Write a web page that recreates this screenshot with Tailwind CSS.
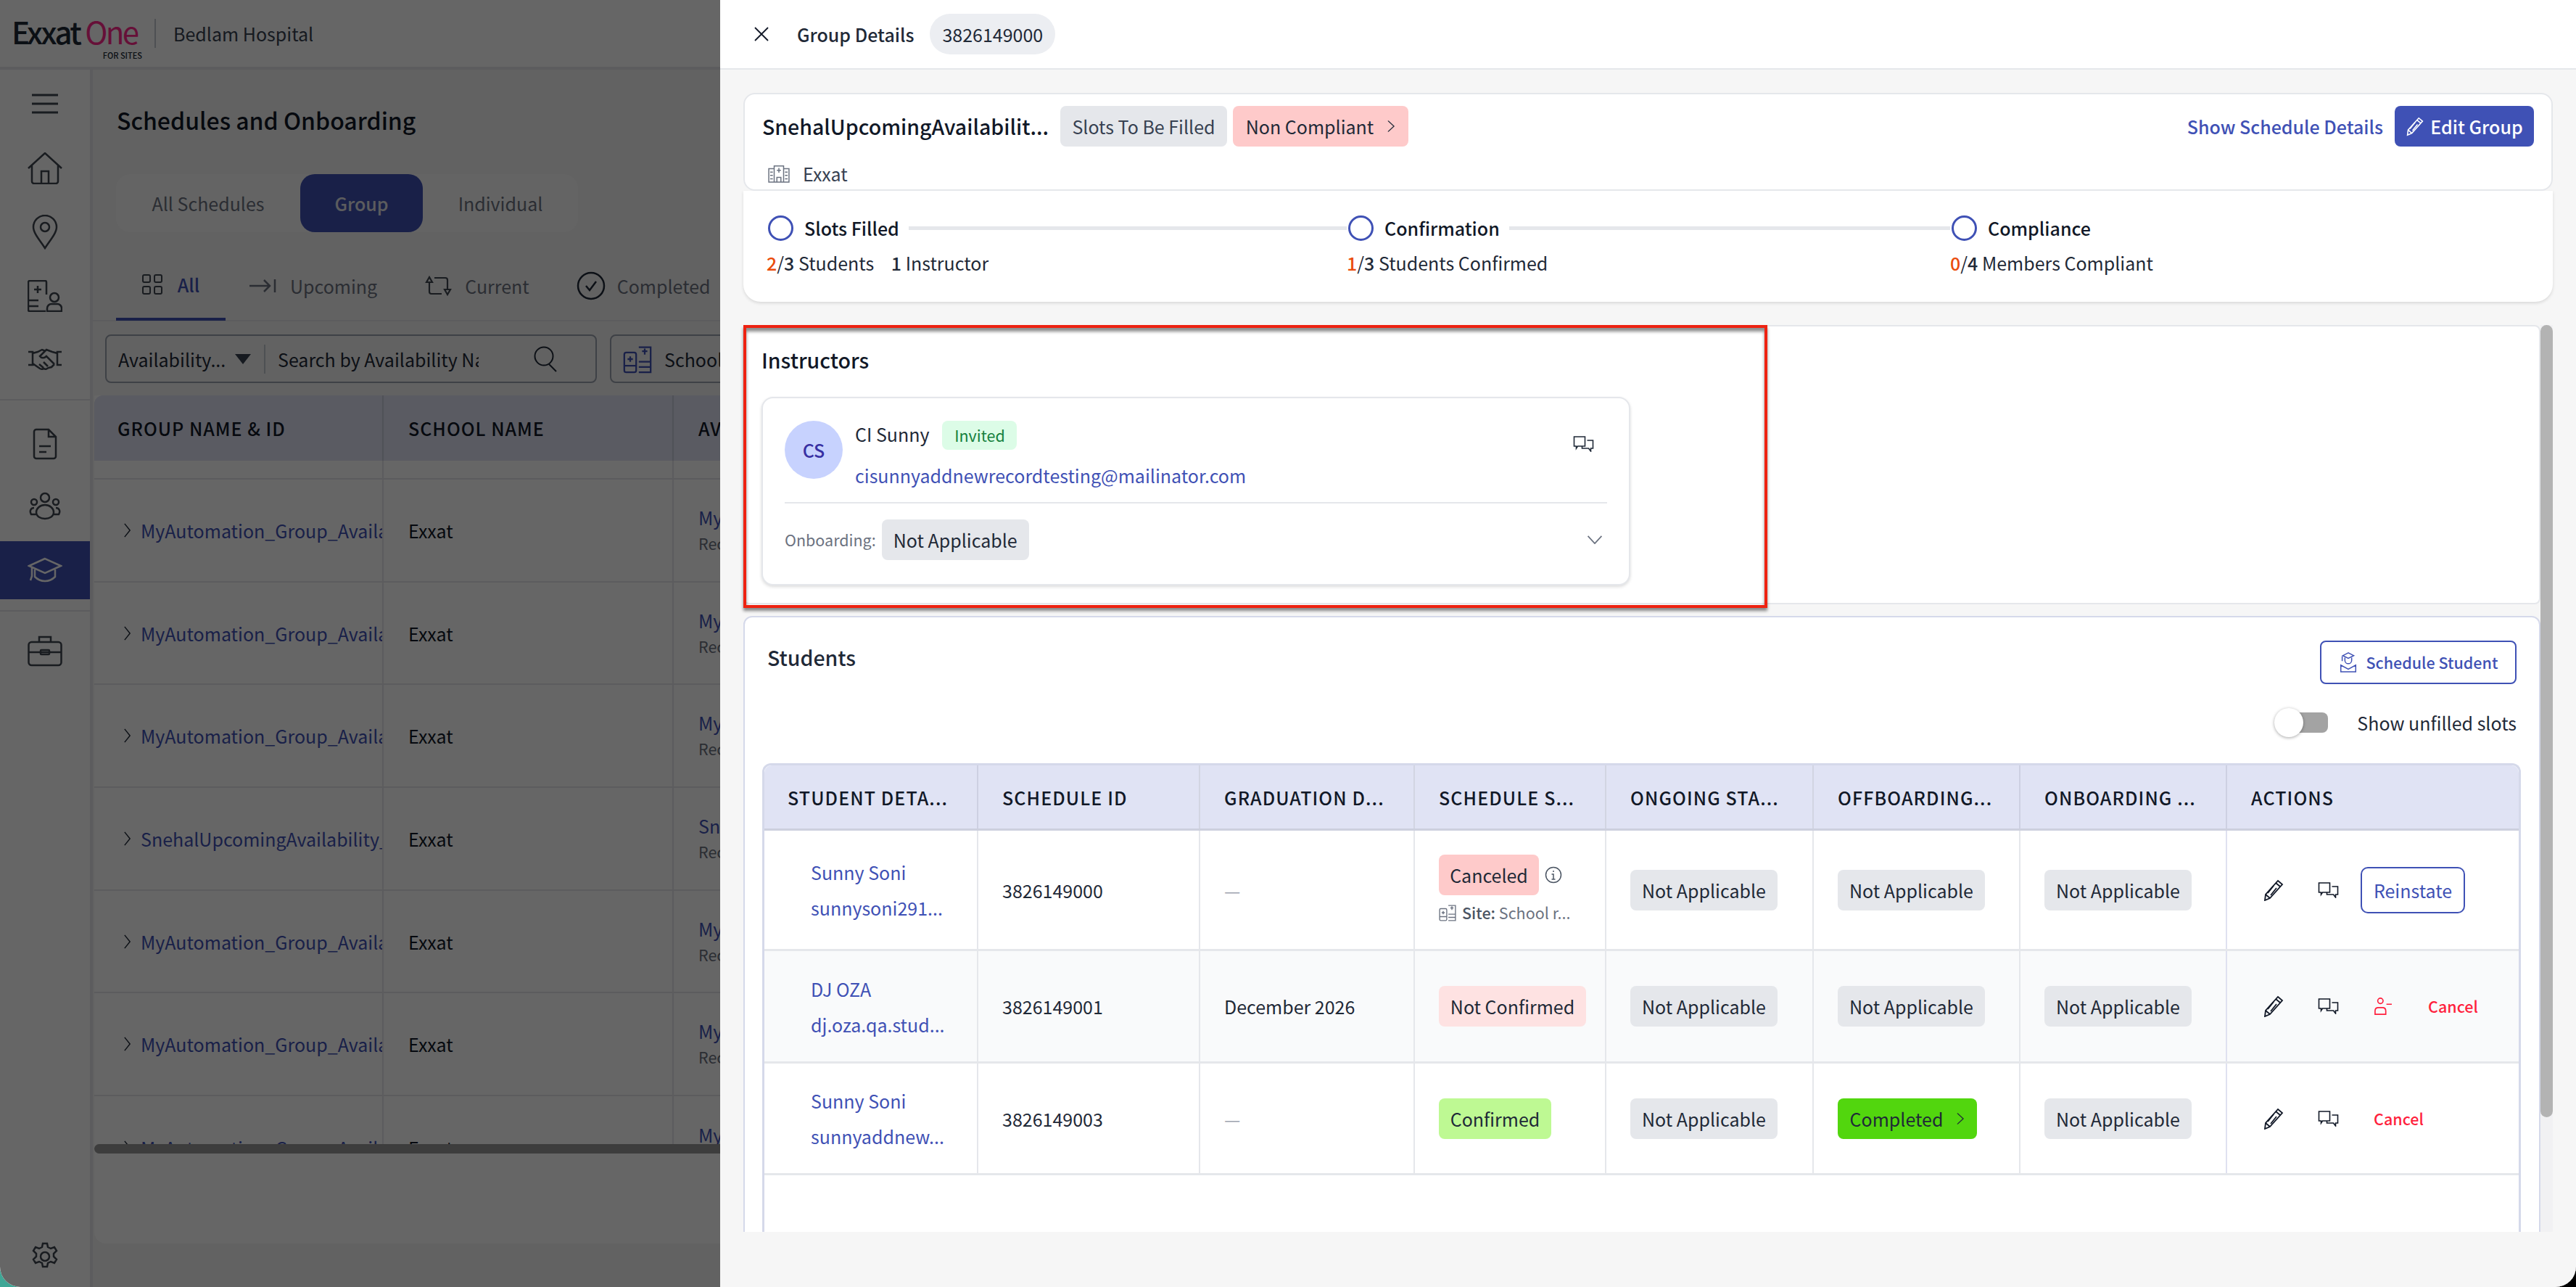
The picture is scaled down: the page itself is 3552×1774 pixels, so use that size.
<!DOCTYPE html>
<html lang="en">
<head>
    <meta charset="UTF-8">
    <meta name="viewport" content="width=device-width, initial-scale=1.0">
    <title>Group Details</title>
    <script src="https://cdn.jsdelivr.net/npm/@tailwindcss/browser@4"></script>
</head>
<body class="bg-[linear-gradient(90deg,#3fa796_0%,#3fa796_50%,#000000_50%,#000000_100%)]">
    <svg class="hidden">
        <symbol id="chat" viewBox="0 0 28 22" fill="none" stroke="currentColor" stroke-width="1.6">
            <path d="M1 1h15v13H6l-2 3v-3H1z"/>
            <path d="M19 6h8v11h-3v4l-3-4h-9v-3"/>
        </symbol>
        <symbol id="pencil" viewBox="0 0 30 30" fill="none" stroke="currentColor" stroke-width="1.8">
            <path d="M21 2l6 5L10 26l-7 3 1-8z"/>
            <path d="M18 5l6 5M15 9l-8 10M19 12l-8 10M4 21l6 5"/>
        </symbol>
        <symbol id="chev-r" viewBox="0 0 12 24" preserveAspectRatio="none" fill="none" stroke="currentColor" stroke-width="1.6">
            <path d="M2 2l8 10-8 10"/>
        </symbol>
        <symbol id="school" viewBox="0 0 44 44" fill="none" stroke="currentColor" stroke-width="2.5">
            <rect x="2" y="12" width="18" height="30" rx="3"/>
            <path d="M2 32h18M11 18v8M7 22h8"/>
            <path d="M24 4h18v38H24M24 26h18M24 34h18M33 6v9M29 10h8"/>
        </symbol>
    </svg>

    <div class="relative w-[3552px] h-[1774px] overflow-hidden rounded-b-[28px] bg-white flex flex-col font-['Noto_Sans_CJK_JP','Noto_Sans',sans-serif] text-[25px] leading-[40px] text-[#1f2937]">
        <!-- page behind the drawer -->
        <header class="h-[96px] shrink-0 bg-white border-b-4 border-[#e5e7eb] flex items-center pl-[16px]">
            <div class="relative w-[180px] h-[70px]">
                <div class="text-[42px] leading-[64px] font-medium tracking-[-2.6px] text-[#202a36] whitespace-nowrap">Exxat <span class="font-normal text-[#ff2a8c]">One</span></div>
                <div class="absolute right-0 bottom-[-2px] text-[11px] leading-[14px] font-medium text-[#202a36]">FOR SITES</div>
            </div>
            <div class="w-[2px] h-[40px] bg-[#c4c8d0] ml-[17px]"></div>
            <div class="ml-[24px] text-[#374151]">Bedlam Hospital</div>
        </header>
        <div class="flex flex-1 min-h-0">
            <aside class="w-[128px] shrink-0 bg-white border-r-4 border-[#e5e7eb] flex flex-col text-[#3f4650]">
                <div class="h-[456px] border-b-2 border-[#e5e7eb] flex flex-col items-center">
                    <svg class="w-[36px] h-[28px] mt-[33px]" viewBox="0 0 36 28" stroke="currentColor" stroke-width="3"><path d="M0 2h36M0 14h36M0 26h36"/></svg>
                    <svg class="w-[48px] h-[44px] mt-[53px]" viewBox="0 0 48 44" fill="none" stroke="currentColor" stroke-width="2.5"><path d="M1 22L24 1l23 21M6 18v22a3 3 0 003 3h30a3 3 0 003-3V18M19 43V26h10v17"/></svg>
                    <svg class="w-[36px] h-[48px] mt-[42px]" viewBox="0 0 36 48" fill="none" stroke="currentColor" stroke-width="2.5"><path d="M18 46C10 34 2 25 2 17a16 16 0 0132 0c0 8-8 17-16 29z"/><circle cx="18" cy="17" r="6"/></svg>
                    <svg class="w-[48px] h-[44px] mt-[42px]" viewBox="0 0 48 44" fill="none" stroke="currentColor" stroke-width="2.5"><path d="M26 20V3a2 2 0 00-2-2H3a2 2 0 00-2 2v38a2 2 0 002 2h22M1 28h14M1 36h14M14 8v10M9 13h10"/><circle cx="37" cy="24" r="6"/><path d="M27 43v-4a6 6 0 016-6h8a6 6 0 016 6v4z"/></svg>
                    <svg class="w-[48px] h-[30px] mt-[50px]" viewBox="0 0 48 30" fill="none" stroke="currentColor" stroke-width="2.5"><path d="M1 5h6v18H1M47 5h-6v18h6M7 7l7-2 6-3 5 2M41 7l-7-2-8-3-9 9c2 3 6 3 9 0l11 11M7 21l10 7c2 1 4 1 5 0l3 1 4-2 4-1 4-4M16 22l6 5M22 19l6 6"/></svg>
                </div>
                <div class="h-[291px] border-b-2 border-[#e5e7eb] flex flex-col items-center">
                    <svg class="w-[34px] h-[44px] mt-[38px]" viewBox="0 0 34 44" fill="none" stroke="currentColor" stroke-width="2.5"><path d="M22 2H5a3 3 0 00-3 3v34a3 3 0 003 3h24a3 3 0 003-3V12zM22 2v10h10M9 25h16M9 33h10"/></svg>
                    <svg class="w-[44px] h-[40px] mt-[44px]" viewBox="0 0 44 40" fill="none" stroke="currentColor" stroke-width="2.5"><circle cx="22" cy="8" r="6"/><circle cx="7" cy="14" r="4"/><circle cx="37" cy="14" r="4"/><path d="M10 28a12 10 0 0124 0c0 6-6 9-12 9s-12-3-12-9zM10 31H3c-3-5 0-9 4-9M34 31h7c3-5 0-9-4-9"/></svg>
                    <div class="w-[124px] h-[80px] bg-[#3f51b5] mt-[28px] flex items-center justify-center text-white">
                        <svg class="w-[48px] h-[36px]" viewBox="0 0 48 36" fill="none" stroke="currentColor" stroke-width="2.5"><path d="M24 2L2 12l22 10 22-10zM10 17v10c8 8 20 8 28 0V17M6 14v12l-2 6"/></svg>
                    </div>
                </div>
                <div class="flex-1 flex flex-col items-center">
                    <svg class="w-[48px] h-[44px] mt-[32px]" viewBox="0 0 48 44" fill="none" stroke="currentColor" stroke-width="2.5"><rect x="1.5" y="10" width="45" height="32" rx="4"/><path d="M16 10V3h16v7M1.5 24h45"/><rect x="18" y="21" width="12" height="6" rx="1"/></svg>
                    <svg class="w-[40px] h-[40px] mt-auto mb-[22px]" viewBox="0 0 40 40" fill="none" stroke="currentColor" stroke-width="2.5"><circle cx="20" cy="20" r="6"/><path d="M17 2h6l1 5 4 2 5-2 3 5-4 4v4l4 4-3 5-5-2-4 2-1 5h-6l-1-5-4-2-5 2-3-5 4-4v-4L4 12l3-5 5 2 4-2z"/></svg>
                </div>
            </aside>
            <main class="flex-1 min-w-0 bg-[#f6f6f6] flex flex-col">
                <h1 class="ml-[33px] mt-[45px] text-[32px] leading-[48px] font-medium text-[#111827]">Schedules and Onboarding</h1>
                <div class="ml-[32px] mt-[51px] w-[637px] h-[80px] rounded-[20px] bg-[#fafafa] flex items-center text-[#6b7280]">
                    <div class="w-[254px] text-center">All Schedules</div>
                    <div class="w-[169px] h-[80px] rounded-[20px] bg-[#3f51b5] text-[#e5e7eb] font-medium flex items-center justify-center">Group</div>
                    <div class="flex-1 text-center">Individual</div>
                </div>
                <div class="mt-[27px] h-[96px] border-b-2 border-[#e5e7eb] flex items-center pl-[32px] text-[#6b7280]">
                    <div class="w-[151px] h-[96px] border-b-4 border-[#3f51b5] flex items-center justify-center gap-[21px] text-[#3f51b5] font-medium">
                        <svg class="w-[28px] h-[28px] text-[#3f4650]" viewBox="0 0 28 28" fill="none" stroke="currentColor" stroke-width="2"><rect x="1" y="1" width="10" height="10" rx="2"/><rect x="17" y="1" width="10" height="10" rx="2"/><rect x="1" y="17" width="10" height="10" rx="2"/><rect x="17" y="17" width="10" height="10" rx="2"/></svg>
                        All
                    </div>
                    <svg class="w-[37px] h-[20px] ml-[33px]" viewBox="0 0 37 20" fill="none" stroke="currentColor" stroke-width="2.5"><path d="M0 10h28M20 2l8 8-8 8M35 1v18"/></svg>
                    <span class="ml-[19px]">Upcoming</span>
                    <svg class="w-[40px] h-[28px] ml-[65px] text-[#3f4650]" viewBox="0 0 40 28" fill="none" stroke="currentColor" stroke-width="2.2"><path d="M7 9v13a3 3 0 003 3h14M3 9l4-7 4 7zM14 3h15a3 3 0 013 3v13M28 19l4 7 4-7z"/></svg>
                    <span class="ml-[16px]">Current</span>
                    <svg class="w-[40px] h-[40px] ml-[65px] text-[#1f2937]" viewBox="0 0 40 40" fill="none" stroke="currentColor" stroke-width="2.5"><circle cx="20" cy="20" r="18"/><path d="M13 20l5 6 9-12"/></svg>
                    <span class="ml-[16px]">Completed</span>
                </div>
                <div class="mt-[18px] ml-[17px] flex gap-[18px] text-[#1f2937]">
                    <div class="w-[678px] h-[67px] border-2 border-[#9ca3af] rounded-[8px] flex items-center pl-[16px]">
                        <span class="w-[161px]">Availability...</span>
                        <span class="w-0 h-0 border-x-[11px] border-x-transparent border-t-[14px] border-t-[#374151]"></span>
                        <span class="w-[2px] h-[40px] bg-[#c4c8d0] ml-[18px]"></span>
                        <span class="ml-[17px] w-[277px] overflow-hidden whitespace-nowrap">Search by Availability Na</span>
                        <svg class="w-[34px] h-[36px] ml-[76px]" viewBox="0 0 34 36" fill="none" stroke="currentColor" stroke-width="2"><circle cx="14" cy="14" r="12.5"/><path d="M21 25l10 10"/></svg>
                    </div>
                    <div class="flex-1 h-[67px] border-2 border-[#9ca3af] rounded-[8px] flex items-center pl-[16px] gap-[17px]">
                        <svg class="w-[40px] h-[40px] text-[#3f51b5]"><use href="#school"/></svg>
                        School
                    </div>
                </div>
                <div class="mt-[17px] ml-[2px] h-[1169px] bg-white rounded-b-[16px] flex flex-col">
                    <div class="h-[90px] shrink-0 bg-[#e0e3f4] rounded-t-[12px] grid grid-cols-[399px_400px_1fr] items-center text-[#111827] tracking-[1px] font-medium">
                        <div class="h-full flex items-center pl-[32px] border-r-2 border-[#c9ccdc]">GROUP NAME &amp; ID</div>
                        <div class="h-full flex items-center pl-[34px] border-r-2 border-[#c9ccdc]">SCHOOL NAME</div>
                        <div class="pl-[34px]">AVAILABILITY</div>
                    </div>
                    <div class="h-[942px] overflow-hidden">
                        <div class="h-[26px] border-b-2 border-[#e5e7eb] grid grid-cols-[399px_400px_1fr]"><div class="border-r-2 border-[#e5e7eb]"></div><div class="border-r-2 border-[#e5e7eb]"></div></div>
                        <div class="h-[141.7px] border-b-2 border-[#e5e7eb] grid grid-cols-[399px_400px_1fr] items-center">
                            <div class="h-full border-r-2 border-[#e5e7eb] flex items-center pl-[40px] gap-[13px] overflow-hidden whitespace-nowrap text-[#3f51b5]"><svg class="w-[11px] h-[22px] shrink-0 text-[#1f2937]"><use href="#chev-r"/></svg>MyAutomation_Group_Availa</div>
                            <div class="h-full border-r-2 border-[#e5e7eb] flex items-center pl-[34px] text-[#111827]">Exxat</div>
                            <div class="pl-[34px] text-[21.5px] leading-[35px] text-[#6b7280]"><div class="text-[25px] text-[#3f51b5]">MyAutomation</div>Recurring</div>
                        </div>
                        <div class="h-[141.7px] border-b-2 border-[#e5e7eb] grid grid-cols-[399px_400px_1fr] items-center">
                            <div class="h-full border-r-2 border-[#e5e7eb] flex items-center pl-[40px] gap-[13px] overflow-hidden whitespace-nowrap text-[#3f51b5]"><svg class="w-[11px] h-[22px] shrink-0 text-[#1f2937]"><use href="#chev-r"/></svg>MyAutomation_Group_Availa</div>
                            <div class="h-full border-r-2 border-[#e5e7eb] flex items-center pl-[34px] text-[#111827]">Exxat</div>
                            <div class="pl-[34px] text-[21.5px] leading-[35px] text-[#6b7280]"><div class="text-[25px] text-[#3f51b5]">MyAutomation</div>Recurring</div>
                        </div>
                        <div class="h-[141.7px] border-b-2 border-[#e5e7eb] grid grid-cols-[399px_400px_1fr] items-center">
                            <div class="h-full border-r-2 border-[#e5e7eb] flex items-center pl-[40px] gap-[13px] overflow-hidden whitespace-nowrap text-[#3f51b5]"><svg class="w-[11px] h-[22px] shrink-0 text-[#1f2937]"><use href="#chev-r"/></svg>MyAutomation_Group_Availa</div>
                            <div class="h-full border-r-2 border-[#e5e7eb] flex items-center pl-[34px] text-[#111827]">Exxat</div>
                            <div class="pl-[34px] text-[21.5px] leading-[35px] text-[#6b7280]"><div class="text-[25px] text-[#3f51b5]">MyAutomation</div>Recurring</div>
                        </div>
                        <div class="h-[141.7px] border-b-2 border-[#e5e7eb] grid grid-cols-[399px_400px_1fr] items-center">
                            <div class="h-full border-r-2 border-[#e5e7eb] flex items-center pl-[40px] gap-[13px] overflow-hidden whitespace-nowrap text-[#3f51b5]"><svg class="w-[11px] h-[22px] shrink-0 text-[#1f2937]"><use href="#chev-r"/></svg>SnehalUpcomingAvailability_</div>
                            <div class="h-full border-r-2 border-[#e5e7eb] flex items-center pl-[34px] text-[#111827]">Exxat</div>
                            <div class="pl-[34px] text-[21.5px] leading-[35px] text-[#6b7280]"><div class="text-[25px] text-[#3f51b5]">SnehalUpcoming</div>Recurring</div>
                        </div>
                        <div class="h-[141.7px] border-b-2 border-[#e5e7eb] grid grid-cols-[399px_400px_1fr] items-center">
                            <div class="h-full border-r-2 border-[#e5e7eb] flex items-center pl-[40px] gap-[13px] overflow-hidden whitespace-nowrap text-[#3f51b5]"><svg class="w-[11px] h-[22px] shrink-0 text-[#1f2937]"><use href="#chev-r"/></svg>MyAutomation_Group_Availa</div>
                            <div class="h-full border-r-2 border-[#e5e7eb] flex items-center pl-[34px] text-[#111827]">Exxat</div>
                            <div class="pl-[34px] text-[21.5px] leading-[35px] text-[#6b7280]"><div class="text-[25px] text-[#3f51b5]">MyAutomation</div>Recurring</div>
                        </div>
                        <div class="h-[141.7px] border-b-2 border-[#e5e7eb] grid grid-cols-[399px_400px_1fr] items-center">
                            <div class="h-full border-r-2 border-[#e5e7eb] flex items-center pl-[40px] gap-[13px] overflow-hidden whitespace-nowrap text-[#3f51b5]"><svg class="w-[11px] h-[22px] shrink-0 text-[#1f2937]"><use href="#chev-r"/></svg>MyAutomation_Group_Availa</div>
                            <div class="h-full border-r-2 border-[#e5e7eb] flex items-center pl-[34px] text-[#111827]">Exxat</div>
                            <div class="pl-[34px] text-[21.5px] leading-[35px] text-[#6b7280]"><div class="text-[25px] text-[#3f51b5]">MyAutomation</div>Recurring</div>
                        </div>
                        <div class="h-[141.7px] grid grid-cols-[399px_400px_1fr] items-center">
                            <div class="h-full border-r-2 border-[#e5e7eb] flex items-center pl-[40px] gap-[13px] overflow-hidden whitespace-nowrap text-[#3f51b5]"><svg class="w-[11px] h-[22px] shrink-0 text-[#1f2937]"><use href="#chev-r"/></svg>MyAutomation_Group_Availa</div>
                            <div class="h-full border-r-2 border-[#e5e7eb] flex items-center pl-[34px] text-[#111827]">Exxat</div>
                            <div class="pl-[34px] text-[21.5px] leading-[35px] text-[#6b7280]"><div class="text-[25px] text-[#3f51b5]">MyAutomation</div>Recurring</div>
                        </div>
                    </div>
                    <div class="h-[13px] shrink-0 rounded-full bg-[#9a9a9a]"></div>
                </div>
            </main>
        </div>

        <!-- dim layer -->
        <div class="absolute inset-0 bg-black/60"></div>

        <!-- drawer -->
        <section class="absolute top-0 right-0 w-[2559px] h-[1774px] bg-[#f6f6f6] flex flex-col">
            <div class="h-[96px] shrink-0 bg-white border-b-2 border-[#e5e7eb] flex items-center pl-[47px]">
                <svg class="w-[20px] h-[20px] text-[#111827]" viewBox="0 0 20 20" fill="none" stroke="currentColor" stroke-width="1.8"><path d="M1 1l18 18M19 1L1 19"/></svg>
                <span class="ml-[39px] font-medium text-[#1f2937]">Group Details</span>
                <span class="ml-[22px] h-[56px] px-[17px] rounded-full bg-[#eceef2] flex items-center text-[#1f2937]">3826149000</span>
            </div>
            <div class="flex-1 min-h-0 pl-[32px] pr-[32px] flex flex-col">
                <div class="mt-[32px] h-[135px] shrink-0 bg-white border-2 border-[#e5e7eb] rounded-[16px] pl-[24px] pr-[24px] pt-[16px] relative">
                    <div class="flex items-center h-[56px]">
                        <span class="w-[411px] text-[28.5px] font-medium text-[#111827] whitespace-nowrap">SnehalUpcomingAvailabilit...</span>
                        <span class="h-[56px] w-[230px] rounded-[8px] bg-[#e5e7eb] flex items-center justify-center text-[#374151]">Slots To Be Filled</span>
                        <span class="ml-[8px] h-[56px] w-[242px] rounded-[8px] bg-[#fecaca] flex items-center justify-center gap-[18px] text-[#1f2937]">Non Compliant <svg class="w-[12px] h-[18px]"><use href="#chev-r"/></svg></span>
                        <span class="ml-auto font-medium text-[#3f51b5]">Show Schedule Details</span>
                        <span class="ml-[16px] w-[192px] h-[56px] rounded-[8px] bg-[#3f51b5] text-white font-medium flex items-center justify-center gap-[8px]"><svg class="w-[26px] h-[28px]"><use href="#pencil"/></svg>Edit Group</span>
                    </div>
                    <div class="flex items-center mt-[17px] ml-[7px] h-[40px]">
                        <svg class="w-[32px] h-[26px] text-[#6b7280]" viewBox="0 0 32 28" fill="none" stroke="currentColor" stroke-width="1.6"><path d="M9 27V3h14v24M9 7H1v20h30V7h-8M13 27v-7h6v7M16 6v7M13 9.500h6M3 12h4M3 17h4M3 22h4M25 12h4M25 17h4M25 22h4"/></svg>
                        <span class="ml-[17px] text-[#374151]">Exxat</span>
                    </div>
                </div>
                <div class="h-[153px] shrink-0 bg-white rounded-b-[24px] shadow-[0_2px_4px_rgba(0,0,0,0.12)] pl-[32px] pt-[31px] flex">
                    <div class="w-[800px]">
                        <div class="flex items-center h-[40px] font-medium text-[#111827]">
                            <span class="w-[35px] h-[35px] ml-[2px] rounded-full border-[3px] border-[#3f51b5]"></span>
                            <span class="ml-[15px]">Slots Filled</span>
                            <span class="flex-1 h-[5px] bg-[#e5e7eb] ml-[13px]"></span>
                        </div>
                        <div class="mt-[8px] text-[#1f2937]"><b class="font-medium text-[#ea4c0c]">2</b>/<b class="font-medium">3</b> Students <b class="font-medium ml-[18px]">1</b> Instructor</div>
                    </div>
                    <div class="w-[832px]">
                        <div class="flex items-center h-[40px] font-medium text-[#111827]">
                            <span class="w-[35px] h-[35px] ml-[2px] rounded-full border-[3px] border-[#3f51b5]"></span>
                            <span class="ml-[15px]">Confirmation</span>
                            <span class="flex-1 h-[5px] bg-[#e5e7eb] ml-[13px]"></span>
                        </div>
                        <div class="mt-[8px] text-[#1f2937]"><b class="font-medium text-[#ea4c0c]">1</b>/<b class="font-medium">3</b> Students Confirmed</div>
                    </div>
                    <div>
                        <div class="flex items-center h-[40px] font-medium text-[#111827]">
                            <span class="w-[35px] h-[35px] ml-[2px] rounded-full border-[3px] border-[#3f51b5]"></span>
                            <span class="ml-[15px]">Compliance</span>
                        </div>
                        <div class="mt-[8px] text-[#1f2937]"><b class="font-medium text-[#ea4c0c]">0</b>/<b class="font-medium">4</b> Members Compliant</div>
                    </div>
                </div>
                <div class="mt-[32px] h-[1250px] shrink-0 flex overflow-hidden">
                    <div class="w-[2478px] shrink-0 flex flex-col">
                        <div class="h-[385px] shrink-0 bg-white border-2 border-[#e5e7eb] rounded-[8px] pl-[23px] pt-[26px]">
                            <div class="text-[28.5px] leading-[40px] font-medium text-[#111827]">Instructors</div>
                            <div class="mt-[31px] w-[1198px] h-[260px] bg-white border-2 border-[#e5e7eb] rounded-[16px] shadow-[0_2px_4px_rgba(0,0,0,0.14)] px-[30px] pt-[31px]">
                                <div class="flex h-[114px] border-b-2 border-[#e5e7eb]">
                                    <div class="w-[80px] h-[80px] rounded-full bg-[#c7d2fe] flex items-center justify-center text-[#3730a3] font-medium">CS</div>
                                    <div class="ml-[17px]">
                                        <div class="flex items-center h-[40px]"><span class="text-[#1f2937] -translate-y-[2px]">CI Sunny</span><span class="ml-[18px] h-[40px] w-[103px] rounded-[8px] bg-[#dcfce7] text-[#15803d] text-[21.500px] flex items-center justify-center">Invited</span></div>
                                        <div class="mt-[15px] text-[#3f51b5]">cisunnyaddnewrecordtesting@mailinator.com</div>
                                    </div>
                                    <svg class="w-[29px] h-[22px] ml-auto mr-[18px] mt-[21px] text-[#1f2937]"><use href="#chat"/></svg>
                                </div>
                                <div class="flex items-center mt-[22px] h-[56px]">
                                    <span class="text-[21.5px] text-[#6b7280]">Onboarding:</span>
                                    <span class="ml-[8px] h-[56px] w-[203px] rounded-[8px] bg-[#e5e7eb] flex items-center justify-center text-[#1f2937]">Not Applicable</span>
                                    <svg class="w-[22px] h-[12px] ml-auto mr-[6px] text-[#6b7280]" viewBox="0 0 24 14" fill="none" stroke="currentColor" stroke-width="2"><path d="M1 1l11 12L23 1"/></svg>
                                </div>
                            </div>
                        </div>
                        <div class="mt-[16px] flex-1 bg-white border-2 border-[#d5d9ea] rounded-t-[12px] relative">
                            <div class="flex justify-between pl-[31px] pr-[31px] pt-[32px]">
                                <div class="text-[28.5px] leading-[46px] font-medium text-[#1f2937]">Students</div>
                                <div class="w-[271px] h-[60px] border-2 border-[#3f51b5] rounded-[8px] flex items-center justify-center gap-[12px] text-[21.5px] font-medium text-[#3f51b5]">
                                    <svg class="w-[26px] h-[28px]" viewBox="0 0 26 30" fill="none" stroke="currentColor" stroke-width="1.6"><path d="M13 1L5 5l8 4 8-4zM8 8v4a5 5 0 0010 0V8M4 6v7M2 29V19l11 6 11-6v10z"/></svg>
                                    Schedule Student
                                </div>
                            </div>
                            <div class="flex items-center justify-end pr-[31px] mt-[29px] h-[48px] text-[#1f2937]">
                                <div class="relative w-[74px] h-[40px] flex items-center">
                                    <div class="ml-[14px] w-[60px] h-[28px] rounded-[8px] bg-[#a3a3a3]"></div>
                                    <div class="absolute left-0 top-0 w-[40px] h-[40px] rounded-full bg-white shadow-[0_1px_4px_rgba(0,0,0,0.35)]"></div>
                                </div>
                                <span class="ml-[40px]">Show unfilled slots</span>
                            </div>
                            <div class="ml-[24px] mt-[32px] w-[2425px] border-x-[3px] border-[#d5d9ea] border-t-[3px] rounded-t-[12px]">
                                <div class="h-[90px] bg-[#e0e3f4] border-b-[3px] border-[#cdd0de] rounded-t-[10px] grid grid-cols-[295px_306px_296px_264px_286px_285px_285px_1fr] items-center font-medium text-[#111827] tracking-[1.1px]">
                                    <div class="h-full flex items-center pl-[32px] border-r-2 border-[#cdd0e2]">STUDENT DETA...</div>
                                    <div class="h-full flex items-center pl-[33px] border-r-2 border-[#d2d5e2]">SCHEDULE ID</div>
                                    <div class="h-full flex items-center pl-[33px] border-r-2 border-[#d2d5e2]">GRADUATION D...</div>
                                    <div class="h-full flex items-center pl-[33px] border-r-2 border-[#d2d5e2]">SCHEDULE S...</div>
                                    <div class="h-full flex items-center pl-[33px] border-r-2 border-[#d2d5e2]">ONGOING STA...</div>
                                    <div class="h-full flex items-center pl-[33px] border-r-2 border-[#cdd0e2]">OFFBOARDING...</div>
                                    <div class="h-full flex items-center pl-[33px] border-r-2 border-[#cdd0e2]">ONBOARDING ...</div>
                                    <div class="h-full flex items-center pl-[33px]">ACTIONS</div>
                                </div>
                                <!-- row 1 -->
                                <div class="h-[166px] bg-white border-b-[3px] border-[#e5e7eb] grid grid-cols-[295px_306px_296px_264px_286px_285px_285px_1fr] items-center text-[#1f2937]">
                                    <div class="h-full flex flex-col justify-center pl-[64px] gap-[9px] border-r-2 border-[#e5e7eb] text-[#3f51b5]"><span>Sunny Soni</span><span>sunnysoni291...</span></div>
                                    <div class="h-full flex items-center pl-[33px] border-r-2 border-[#e5e7eb]">3826149000</div>
                                    <div class="h-full flex items-center pl-[33px] border-r-2 border-[#e5e7eb] text-[#9ca3af]">—</div>
                                    <div class="h-full flex flex-col justify-center pl-[33px] border-r-2 border-[#e5e7eb]">
                                        <div class="flex items-center gap-[8px]">
                                            <span class="h-[56px] w-[138px] rounded-[8px] bg-[#fecaca] flex items-center justify-center">Canceled</span>
                                            <svg class="w-[24px] h-[24px] text-[#4b5563]" viewBox="0 0 24 24" fill="none" stroke="currentColor" stroke-width="1.5"><circle cx="12" cy="12" r="10.5"/><path d="M12 6v2M9.500 11H12v7M9.500 18h5"/></svg>
                                        </div>
                                        <div class="flex items-center gap-[8px] mt-[7px] text-[21.5px] leading-[34px] text-[#6b7280]">
                                            <svg class="w-[24px] h-[24px] shrink-0"><use href="#school"/></svg><span><b class="font-medium text-[#4b5563]">Site:</b> School r...</span>
                                        </div>
                                    </div>
                                    <div class="h-full flex items-center pl-[33px] border-r-2 border-[#e5e7eb]"><span class="h-[56px] w-[203px] rounded-[8px] bg-[#e5e7eb] flex items-center justify-center">Not Applicable</span></div>
                                    <div class="h-full flex items-center pl-[33px] border-r-2 border-[#e5e7eb]"><span class="h-[56px] w-[203px] rounded-[8px] bg-[#e5e7eb] flex items-center justify-center">Not Applicable</span></div>
                                    <div class="h-full flex items-center pl-[33px] border-r-2 border-[#dfe1f0]"><span class="h-[56px] w-[203px] rounded-[8px] bg-[#e5e7eb] flex items-center justify-center">Not Applicable</span></div>
                                    <div class="h-full flex items-center pl-[49px]">
                                        <svg class="w-[30px] h-[30px] text-[#111827]"><use href="#pencil"/></svg>
                                        <svg class="w-[29px] h-[22px] ml-[46px] text-[#111827]"><use href="#chat"/></svg>
                                        <span class="ml-[30px] w-[144px] h-[64px] border-2 border-[#3f51b5] rounded-[10px] flex items-center justify-center text-[#3f51b5]">Reinstate</span>
                                    </div>
                                </div>
                                <!-- row 2 -->
                                <div class="h-[155px] bg-[#f9fafb] border-b-[3px] border-[#e5e7eb] grid grid-cols-[295px_306px_296px_264px_286px_285px_285px_1fr] items-center text-[#1f2937]">
                                    <div class="h-full flex flex-col justify-center pl-[64px] gap-[9px] border-r-2 border-[#e5e7eb] text-[#3f51b5]"><span>DJ OZA</span><span>dj.oza.qa.stud...</span></div>
                                    <div class="h-full flex items-center pl-[33px] border-r-2 border-[#e5e7eb]">3826149001</div>
                                    <div class="h-full flex items-center pl-[33px] border-r-2 border-[#e5e7eb]">December 2026</div>
                                    <div class="h-full flex items-center pl-[33px] border-r-2 border-[#e5e7eb]"><span class="h-[56px] w-[203px] rounded-[8px] bg-[#fee2e2] flex items-center justify-center">Not Confirmed</span></div>
                                    <div class="h-full flex items-center pl-[33px] border-r-2 border-[#e5e7eb]"><span class="h-[56px] w-[203px] rounded-[8px] bg-[#e5e7eb] flex items-center justify-center">Not Applicable</span></div>
                                    <div class="h-full flex items-center pl-[33px] border-r-2 border-[#e5e7eb]"><span class="h-[56px] w-[203px] rounded-[8px] bg-[#e5e7eb] flex items-center justify-center">Not Applicable</span></div>
                                    <div class="h-full flex items-center pl-[33px] border-r-2 border-[#dfe1f0]"><span class="h-[56px] w-[203px] rounded-[8px] bg-[#e5e7eb] flex items-center justify-center">Not Applicable</span></div>
                                    <div class="h-full flex items-center pl-[49px]">
                                        <svg class="w-[30px] h-[30px] text-[#111827]"><use href="#pencil"/></svg>
                                        <svg class="w-[29px] h-[22px] ml-[46px] text-[#111827]"><use href="#chat"/></svg>
                                        <svg class="w-[28px] h-[24px] ml-[47px] text-[#ff1f3d]" viewBox="0 0 28 26" fill="none" stroke="currentColor" stroke-width="1.8"><circle cx="10" cy="5" r="4"/><path d="M2 25v-5c0-3 2-5 5-5h6c3 0 5 2 5 5v5zM19 10h8"/></svg>
                                        <span class="ml-[48px] text-[21.5px] font-medium text-[#ff1f3d]">Cancel</span>
                                    </div>
                                </div>
                                <!-- row 3 -->
                                <div class="h-[154px] bg-white border-b-[3px] border-[#e5e7eb] grid grid-cols-[295px_306px_296px_264px_286px_285px_285px_1fr] items-center text-[#1f2937]">
                                    <div class="h-full flex flex-col justify-center pl-[64px] gap-[9px] border-r-2 border-[#e5e7eb] text-[#3f51b5]"><span>Sunny Soni</span><span>sunnyaddnew...</span></div>
                                    <div class="h-full flex items-center pl-[33px] border-r-2 border-[#e5e7eb]">3826149003</div>
                                    <div class="h-full flex items-center pl-[33px] border-r-2 border-[#e5e7eb] text-[#9ca3af]">—</div>
                                    <div class="h-full flex items-center pl-[33px] border-r-2 border-[#e5e7eb]"><span class="h-[56px] w-[155px] rounded-[8px] bg-[#bef993] flex items-center justify-center">Confirmed</span></div>
                                    <div class="h-full flex items-center pl-[33px] border-r-2 border-[#e5e7eb]"><span class="h-[56px] w-[203px] rounded-[8px] bg-[#e5e7eb] flex items-center justify-center">Not Applicable</span></div>
                                    <div class="h-full flex items-center pl-[33px] border-r-2 border-[#e5e7eb]"><span class="h-[56px] w-[192px] rounded-[8px] bg-[#52d60e] flex items-center justify-center gap-[18px]">Completed <svg class="w-[12px] h-[18px]"><use href="#chev-r"/></svg></span></div>
                                    <div class="h-full flex items-center pl-[33px] border-r-2 border-[#dfe1f0]"><span class="h-[56px] w-[203px] rounded-[8px] bg-[#e5e7eb] flex items-center justify-center">Not Applicable</span></div>
                                    <div class="h-full flex items-center pl-[49px]">
                                        <svg class="w-[30px] h-[30px] text-[#111827]"><use href="#pencil"/></svg>
                                        <svg class="w-[29px] h-[22px] ml-[46px] text-[#111827]"><use href="#chat"/></svg>
                                        <span class="ml-[48px] text-[21.5px] font-medium text-[#ff1f3d]">Cancel</span>
                                    </div>
                                </div>
                                <div class="h-[100px]"></div>
                            </div>
                        </div>
                    </div>
                    <div class="w-[17px] shrink-0 bg-[#f1f1f3] h-full">
                        <div class="h-[1092px] rounded-full bg-[#b3b3b3]"></div>
                    </div>
                </div>
            </div>
        </section>

        <!-- red annotation box from the screenshot -->
        <div class="absolute left-[1025px] top-[448px] w-[1412px] h-[390px] border-4 border-[#ee2211] shadow-[0_4px_4px_rgba(0,0,0,0.45),inset_0_5px_4px_rgba(0,0,0,0.45)]"></div>
    </div>
</body>
</html>
